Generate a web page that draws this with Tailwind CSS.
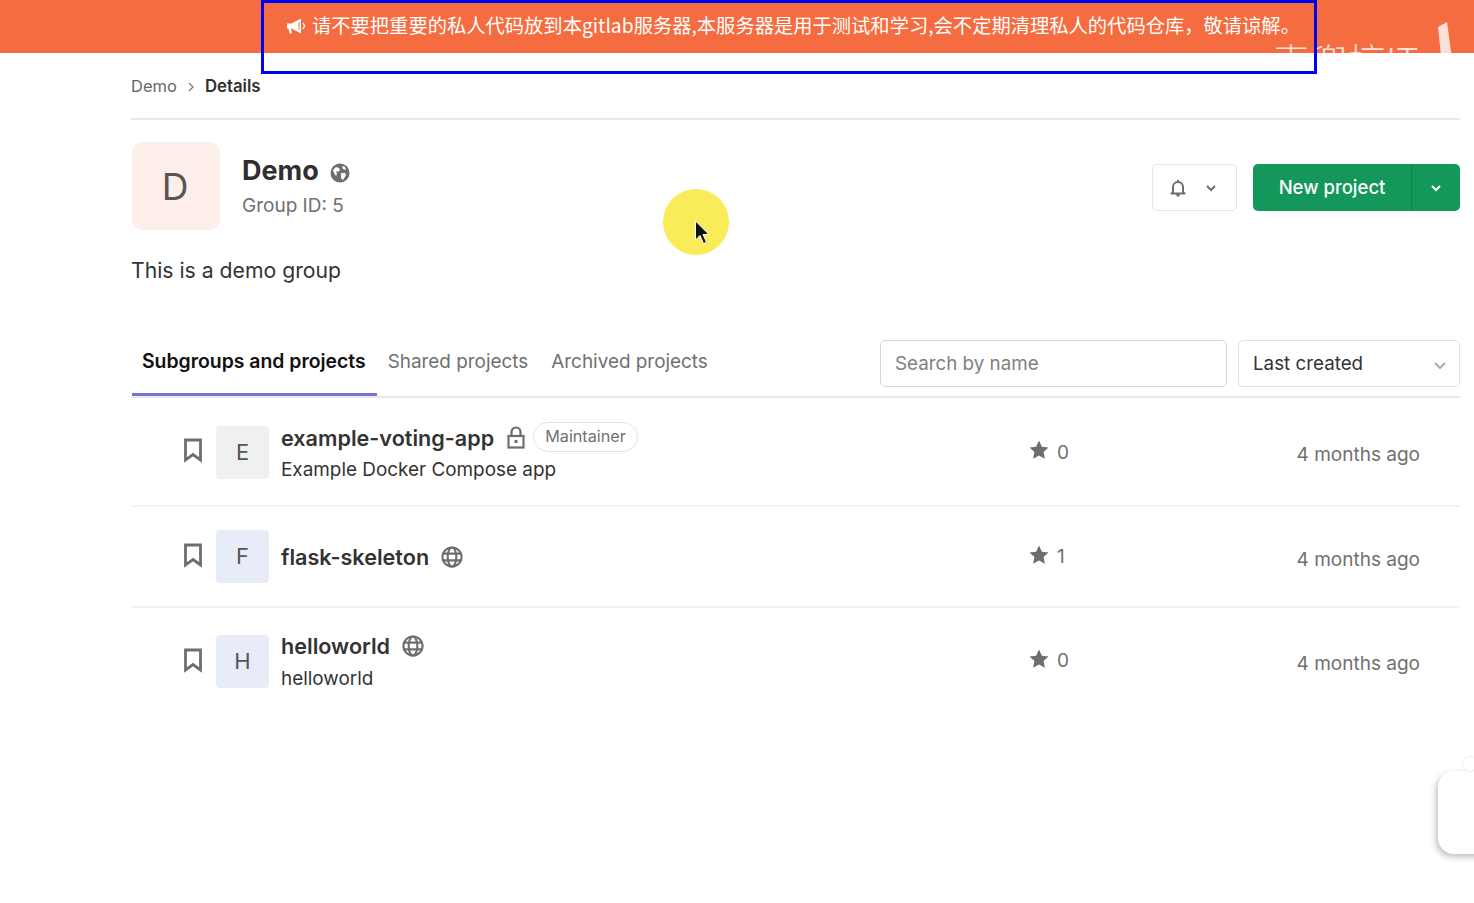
<!DOCTYPE html>
<html lang="zh-CN">
<head>
<meta charset="utf-8"/>
<title>Demo · GitLab</title>
<script src="https://cdn.jsdelivr.net/npm/@tailwindcss/browser@4"></script>
</head>
<body class="bg-white font-['Inter','Noto_Sans_CJK_SC',sans-serif] text-[#303030] h-[903px] overflow-hidden relative">

<!-- banner -->
<div class="h-[53px] bg-[#f46c3f] flex items-start pl-[286px] pt-[13px] text-white text-[19.300px] leading-[24px] whitespace-nowrap">
  <svg class="w-[20px] h-[20px] mt-[3px] mr-[6px] shrink-0" viewBox="0 0 20 20" fill="none">
    <path d="M1 7.500h4.500L15 2.500v15L5.500 12.500H5l1 5H3.600L2.500 12.500H1z" fill="#fff"/>
    <path d="M12.500 6.500v7l1 .6V5.900z" fill="#f46c3f"/>
    <path d="M17 7l1.500 3L17 13" stroke="#fff" stroke-width="1.500"/>
  </svg>
  <span class="font-['Noto_Sans_CJK_SC','Inter',sans-serif]">请不要把重要的私人代码放到本gitlab服务器,本服务器是用于测试和学习,会不定期清理私人的代码仓库，敬请谅解。</span>
</div>

<main class="pl-[131px] pr-[14px]">
  <!-- breadcrumb -->
  <div class="h-[67px] border-b-2 border-[#e9e9e9] flex items-center pt-[2px] text-[16.500px] text-[#666]">
    <span>Demo</span>
    <svg class="w-[10px] h-[10px] mx-[9px]" viewBox="0 0 10 10" fill="none"><path d="M3 1l4 4-4 4" stroke="#777" stroke-width="1.200"/></svg>
    <span class="font-semibold text-[16.800px] text-[#303030]">Details</span>
  </div>

  <!-- group header -->
  <div class="flex mt-[22px] pl-[1px]">
    <div class="w-[88px] h-[88px] rounded-[10px] bg-[#fdeee9] border border-[#f8f0ed] flex items-center justify-center pt-[2px] pr-[2px] text-[37px] text-[#555]">D</div>
    <div class="ml-[22px] pt-[11px]">
      <div class="flex items-center h-[36px]">
        <span class="text-[27px] font-bold text-[#2f2f2f] leading-[36px]">Demo</span>
        <svg class="w-[20px] h-[20px] ml-[11px] mt-[3px]" viewBox="0 0 20 20"><circle cx="10" cy="10" r="9.500" fill="#6e6e6e"/><path d="M3 7l3-3 3 1 1 2-2 2-2-1 1 3-1 2-2-3zM11 10l4 0 1 2-3 5-2-2zM12 3l3 1 1 3-3-1z" fill="#fff"/></svg>
      </div>
      <div class="text-[19px] text-[#707070] leading-[26px] mt-[4px]">Group ID: 5</div>
    </div>
    <div class="ml-auto flex mt-[22px] h-[47px]">
      <div class="w-[85px] h-[47px] rounded-[5px] border border-[#e5e5e5] flex items-center pl-[15px]">
        <svg class="w-[20px] h-[20px]" viewBox="0 0 20 20" fill="none"><path d="M5 14V9a5 5 0 0110 0v5l1.500 1.500h-13zM8.500 17.500h3" stroke="#6e6e6e" stroke-width="2" stroke-linejoin="round"/><path d="M10 2v2" stroke="#6e6e6e" stroke-width="2"/></svg>
        <svg class="w-[12px] h-[12px] ml-[17px]" viewBox="0 0 12 12" fill="none"><path d="M2 4l4 4 4-4" stroke="#6e6e6e" stroke-width="2"/></svg>
      </div>
      <div class="ml-[16px] w-[207px] h-[47px] rounded-[5px] bg-[#13975a] flex text-white">
        <div class="w-[159px] border-r border-[#0f8049] flex items-center justify-center text-[18.500px] font-medium">New project</div>
        <div class="flex-1 flex items-center justify-center">
          <svg class="w-[12px] h-[12px]" viewBox="0 0 12 12" fill="none"><path d="M2 4l4 4 4-4" stroke="#fff" stroke-width="2"/></svg>
        </div>
      </div>
    </div>
  </div>

  <p class="text-[21.200px] leading-[28px] text-[#333] mt-[26px]">This is a demo group</p>

  <!-- tabs -->
  <div class="flex items-start h-[114px] border-b-2 border-[#e9e9e9] relative">
    <div class="absolute bottom-0 left-[1px] h-[3px] w-[245px] bg-[#7476cf]"></div>
    <div class="flex mt-[65px] leading-[26px] text-[18.900px] text-[#707070]">
      <span class="ml-[11px] mt-[-1px] text-[19.400px] font-semibold text-[#111]">Subgroups and projects</span>
      <span class="ml-[22px]">Shared projects</span>
      <span class="ml-[23px]">Archived projects</span>
    </div>
    <div class="ml-auto flex mt-[56px]">
      <div class="w-[347px] h-[47px] border border-[#d6d6d6] rounded-[5px] flex items-center pl-[14px] pt-[2px] text-[18.800px] text-[#808080]">Search by name</div>
      <div class="ml-[11px] w-[222px] h-[47px] border border-[#e0e0e0] rounded-[5px] flex items-center justify-between pl-[14px] pr-[12px] pt-[2px] text-[18.800px] text-[#333]">
        <span>Last created</span>
        <svg class="w-[14px] h-[14px]" viewBox="0 0 14 14" fill="none"><path d="M2 5l5 5 5-5" stroke="#aaa" stroke-width="2"/></svg>
      </div>
    </div>
  </div>

  <!-- project rows -->
  <div class="flex items-center h-[109px] border-b-2 border-[#f2f2f2] pl-[52px] pr-[40px]">
    <svg class="w-[20px] h-[25px] mt-[-2px]" viewBox="0 0 20 25" fill="none"><path d="M2.500 2h15v20L10 16.500 2.500 22z" stroke="#6e6e6e" stroke-width="2.800"/></svg>
    <div class="ml-[13px] mt-[2px] w-[53px] h-[53px] rounded-[4px] bg-[#f0f0f0] flex items-center justify-center text-[22px] text-[#555]">E</div>
    <div class="ml-[12px] mt-[4px] w-[748px]">
      <div class="flex items-center h-[28px]">
        <span class="text-[21.600px] font-semibold text-[#333]">example-voting-app</span>
        <svg class="w-[18px] h-[23px] ml-[13px] mt-[-2px]" viewBox="0 0 18 23" fill="none"><path d="M4.500 10V6a4.500 4.500 0 019 0v4" stroke="#6e6e6e" stroke-width="2.200"/><rect x="1.500" y="10" width="15" height="11.500" stroke="#6e6e6e" stroke-width="2.200"/><rect x="7.500" y="14" width="3" height="3" fill="#6e6e6e"/></svg>
        <span class="ml-[8px] mt-[-4px] h-[30px] px-[11px] rounded-full border border-[#e3e3e3] flex items-center text-[16.200px] text-[#707070]">Maintainer</span>
      </div>
      <div class="text-[18.900px] leading-[26px] text-[#333] mt-[4px]">Example Docker Compose app</div>
    </div>
    <div class="flex items-center text-[19px] text-[#707070] mt-[3px]">
      <svg class="w-[20px] h-[20px] mr-[8px] mt-[-7px]" viewBox="0 0 20 20"><path d="M10 .5l2.900 6.200 6.600.8-4.900 4.600 1.300 6.700L10 15.500l-5.900 3.300 1.300-6.700L.5 7.500l6.600-.8z" fill="#6e6e6e"/></svg>0
    </div>
    <div class="ml-auto mt-[8px] text-[19px] text-[#707070]">4 months ago</div>
  </div>

  <div class="flex items-center h-[101px] border-b-2 border-[#f2f2f2] pl-[52px] pr-[40px]">
    <svg class="w-[20px] h-[25px] mt-[-2px]" viewBox="0 0 20 25" fill="none"><path d="M2.500 2h15v20L10 16.500 2.500 22z" stroke="#6e6e6e" stroke-width="2.800"/></svg>
    <div class="ml-[13px] w-[53px] h-[53px] rounded-[4px] bg-[#e8ecf8] flex items-center justify-center text-[22px] text-[#555]">F</div>
    <div class="ml-[12px] mt-[2px] w-[748px] flex items-center">
      <span class="text-[21.600px] font-semibold text-[#333]">flask-skeleton</span>
      <svg class="w-[22px] h-[22px] ml-[12px]" viewBox="0 0 23 23" fill="none" stroke="#6e6e6e" stroke-width="2.200"><circle cx="11.500" cy="11.500" r="10"/><ellipse cx="11.500" cy="11.500" rx="4.500" ry="10"/><path d="M1.500 8h20M1.500 15h20"/></svg>
    </div>
    <div class="flex items-center text-[19px] text-[#707070] mt-[1px]">
      <svg class="w-[20px] h-[20px] mr-[8px] mt-[-5px]" viewBox="0 0 20 20"><path d="M10 .5l2.900 6.200 6.600.8-4.900 4.600 1.300 6.700L10 15.500l-5.900 3.300 1.300-6.700L.5 7.500l6.600-.8z" fill="#6e6e6e"/></svg>1
    </div>
    <div class="ml-auto text-[19px] text-[#707070] mt-[7px]">4 months ago</div>
  </div>

  <div class="flex items-center h-[106px] pl-[52px] pr-[40px]">
    <svg class="w-[20px] h-[25px] mt-[-2px]" viewBox="0 0 20 25" fill="none"><path d="M2.500 2h15v20L10 16.500 2.500 22z" stroke="#6e6e6e" stroke-width="2.800"/></svg>
    <div class="ml-[13px] w-[53px] h-[53px] rounded-[4px] bg-[#e8ecf8] flex items-center justify-center text-[22px] text-[#555]">H</div>
    <div class="ml-[12px] mt-[2px] w-[748px]">
      <div class="flex items-center h-[28px]">
        <span class="text-[21.600px] font-semibold text-[#333]">helloworld</span>
        <svg class="w-[22px] h-[22px] ml-[12px]" viewBox="0 0 23 23" fill="none" stroke="#6e6e6e" stroke-width="2.200"><circle cx="11.500" cy="11.500" r="10"/><ellipse cx="11.500" cy="11.500" rx="4.500" ry="10"/><path d="M1.500 8h20M1.500 15h20"/></svg>
      </div>
      <div class="text-[18.900px] leading-[26px] text-[#333] mt-[6px]">helloworld</div>
    </div>
    <div class="flex items-center text-[19px] text-[#707070] mt-[1px]">
      <svg class="w-[20px] h-[20px] mr-[8px] mt-[-5px]" viewBox="0 0 20 20"><path d="M10 .5l2.900 6.200 6.600.8-4.900 4.600 1.300 6.700L10 15.500l-5.900 3.300 1.300-6.700L.5 7.500l6.600-.8z" fill="#6e6e6e"/></svg>0
    </div>
    <div class="ml-auto mt-[6px] text-[19px] text-[#707070]">4 months ago</div>
  </div>
</main>

<!-- watermark -->
<div class="absolute left-[1272px] top-[38px] text-[38px] leading-[44px] text-white/80 font-['Noto_Sans_CJK_SC',sans-serif] font-light whitespace-nowrap">麦兜搞IT</div>
<svg class="absolute left-[1436px] top-[20px] w-[38px] h-[66px]" viewBox="0 0 38 66"><path d="M2 7l9-5 6 44 21 2v16l-30 0z" fill="#fff" fill-opacity=".8"/></svg>

<!-- annotation box over the banner -->
<div class="absolute left-[261px] top-0 w-[1056px] h-[74px] border-[3px] border-[#0000f0] pointer-events-none"></div>

<!-- recording cursor highlight -->
<div class="absolute left-[663px] top-[189px] w-[66px] h-[66px] rounded-full bg-[#faeb58]"></div>
<svg class="absolute left-[694px] top-[220px] w-[16px] h-[26px]" viewBox="0 0 16 26"><path d="M1.500 1v19l4.500-4.500 3.500 8 3-1.300-3.500-7.700h6z" fill="#111" stroke="#fff" stroke-width="1"/></svg>

<!-- floating widget at the right edge -->
<div class="absolute left-[1438px] top-[771px] w-[60px] h-[83px] rounded-[16px] bg-white shadow-[-2px_3px_6px_rgba(0,0,0,0.25)]"></div>
<div class="absolute left-[1463px] top-[757px] w-[14px] h-[14px] rounded-full bg-white shadow-[0_0_3px_rgba(0,0,0,0.15)]"></div>
</body>
</html>
